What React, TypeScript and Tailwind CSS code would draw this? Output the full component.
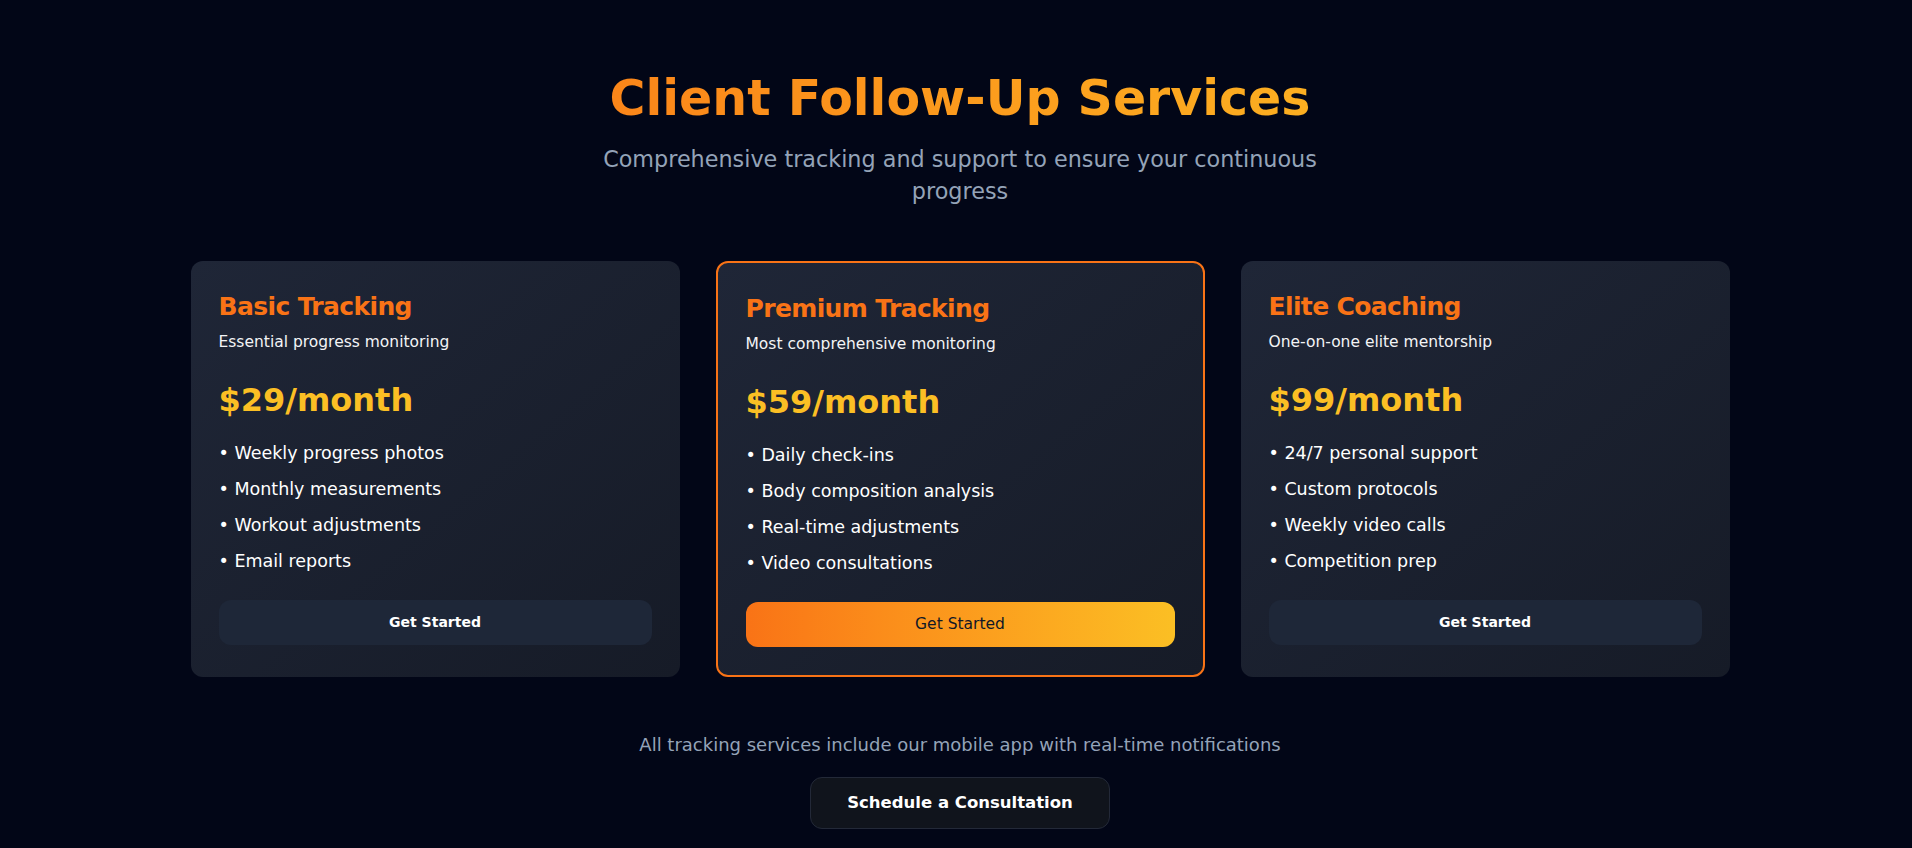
import React from "react";

const plans = [
  {
    name: "Basic Tracking",
    tagline: "Essential progress monitoring",
    price: "$29/month",
    features: [
      "Weekly progress photos",
      "Monthly measurements",
      "Workout adjustments",
      "Email reports",
    ],
    featured: false,
  },
  {
    name: "Premium Tracking",
    tagline: "Most comprehensive monitoring",
    price: "$59/month",
    features: [
      "Daily check-ins",
      "Body composition analysis",
      "Real-time adjustments",
      "Video consultations",
    ],
    featured: true,
  },
  {
    name: "Elite Coaching",
    tagline: "One-on-one elite mentorship",
    price: "$99/month",
    features: [
      "24/7 personal support",
      "Custom protocols",
      "Weekly video calls",
      "Competition prep",
    ],
    featured: false,
  },
];

const PlanCard = ({ plan }: { plan: (typeof plans)[number] }) => {
  return (
    <div
      className={
        plan.featured
          ? "rounded-xl border-2 border-[#f97316] bg-gradient-to-br from-[#1f2637] to-[#161b27] p-7"
          : "rounded-xl bg-gradient-to-br from-[#1f2637] to-[#161b27] p-7"
      }>
      <h3 className="text-[25px] leading-[36px] font-bold tracking-tight text-[#f97316]">
        {plan.name}
      </h3>
      <p className="mt-[7px] text-[15.5px] leading-[20px] text-[#f3f4f6]">
        {plan.tagline}
      </p>
      <div className="mt-[28px] text-[32px] leading-[40px] font-bold text-[#fbbf24]">
        {plan.price}
      </div>
      <ul className="mt-[19px] flex flex-col gap-2 text-[17.5px] leading-[28px] text-white">
        {plan.features.map((f) => (
          <li key={f}>• {f}</li>
        ))}
      </ul>
      {plan.featured ? (
        <button className="mt-[25px] h-[45px] w-full rounded-xl bg-gradient-to-r from-[#f97316] to-[#fbbf24] text-[15.5px] text-[#111827]">
          Get Started
        </button>
      ) : (
        <button className="mt-[25px] h-[45px] w-full rounded-xl bg-[#1e2738] text-[14px] font-bold text-white">
          Get Started
        </button>
      )}
    </div>
  );
};

const App = () => {
  return (
    <div className="min-h-screen bg-[#020617] pl-[8px] font-['DejaVu_Sans',sans-serif]">
      <section className="flex flex-col items-center pt-[67px] pb-10">
        <div className="w-full max-w-7xl text-center">
          <h1 className="bg-gradient-to-r from-[#f97316] to-[#fbbf24] bg-clip-text text-[49px] leading-[64px] font-bold text-transparent">
            Client Follow-Up Services
          </h1>
          <p className="mx-auto mt-3 max-w-3xl text-[22.3px] leading-[32px] text-[#94a3b8]">
            Comprehensive tracking and support to ensure your continuous
            progress
          </p>
        </div>

        <div className="mt-[54px] grid w-[1539px] grid-cols-3 gap-[36px]">
          {plans.map((p) => (
            <PlanCard key={p.name} plan={p} />
          ))}
        </div>

        <p className="mt-[54px] text-[18px] leading-[28px] text-[#94a3b8]">
          All tracking services include our mobile app with real-time
          notifications
        </p>
        <button className="mt-[18px] inline-flex h-[52px] items-center rounded-xl border border-[#232938] bg-[#10141c] px-9 text-[16.5px] font-bold text-white">
          Schedule a Consultation
        </button>
      </section>
    </div>
  );
};

export default App;
